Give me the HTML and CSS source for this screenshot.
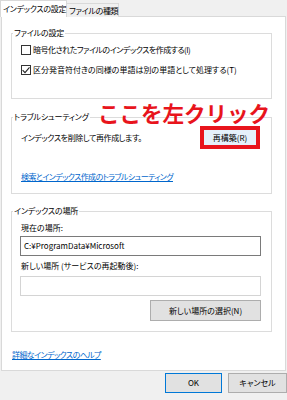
FILE: index.html
```html
<!DOCTYPE html>
<html lang="ja">
<head>
<meta charset="utf-8">
<link rel="stylesheet" href="styles.css">
</head>
<body>
<div class="dialog">
  <div class="tabs">
    <div class="tab active">インデックスの設定</div>
    <div class="tab">ファイルの種類</div>
  </div>
  <div class="panel">
    <section class="group g1">
      <div class="legend">ファイルの設定</div>
      <div class="check-row first">
        <span class="checkbox"></span>
        <span class="t-encrypt">暗号化されたファイルのインデックスを作成する(I)</span>
      </div>
      <div class="check-row">
        <span class="checkbox"><svg viewBox="0 0 10 10" width="10" height="10"><path d="M1.6 5.1 L4 7.6 L8.5 2.3" fill="none" stroke="#222" stroke-width="1.1"/></svg></span>
        <span>区分発音符付きの同様の単語は別の単語として処理する(T)</span>
      </div>
    </section>

    <section class="group g2">
      <div class="legend">トラブルシューティング</div>
      <div class="rebuild-row">
        <span class="t-rebuild">インデックスを削除して再作成します。</span>
        <span class="highlight"><span class="btn rebuild">再構築(R)</span></span>
      </div>
      <a class="link trouble">検索とインデックス作成のトラブルシューティング</a>
      <div class="annotation">ここを左クリック</div>
    </section>

    <section class="group g3">
      <div class="legend">インデックスの場所</div>
      <div class="label l1">現在の場所:</div>
      <div class="textbox">C:¥ProgramData¥Microsoft</div>
      <div class="label l2">新しい場所 (サービスの再起動後):</div>
      <div class="textbox disabled"></div>
      <div class="btn-row"><span class="btn select">新しい場所の選択(N)</span></div>
    </section>

    <a class="link help">詳細なインデックスのヘルプ</a>
  </div>
  <div class="footer">
    <span class="btn ok">OK</span>
    <span class="btn cancel">キャンセル</span>
  </div>
</div>
</body>
</html>
```

FILE: styles.css
```css
* { box-sizing: border-box; }
html, body {
  margin: 0;
  padding: 0;
  background: #f0f0f0;
  width: 287px;
  height: 400px;
  overflow: hidden;
}
body {
  font-family: "Noto Sans CJK JP", "Noto Sans", sans-serif;
  font-size: 8px;
  line-height: 12px;
  color: #000;
  font-feature-settings: "palt";
}
.dialog { width: 287px; }
.tabs {
  display: flex;
  align-items: flex-end;
  height: 16px;
  position: relative;
  z-index: 1;
}
.tab {
  height: 14px;
  line-height: 13px;
  padding: 0 2px;
  border: 1px solid #d9d9d9;
  border-bottom: none;
  background: #f0f0f0;
  margin-bottom: -1px;
  white-space: nowrap;
  letter-spacing: -0.3px;
}
.tab.active {
  height: 17px;
  line-height: 15px;
  width: 67px;
  background: #fff;
  padding: 0 2px;
}
.tab + .tab { border-left: none; width: 52px; }
.panel {
  margin-left: 1px;
  width: 285px;
  height: 355px;
  background: #fff;
  border: 1px solid #d9d9d9;
  padding: 16px 0 0 9px;
}
.group {
  width: 261px;
  border: 1px solid #dcdcdc;
  padding: 0 10px 0 9px;
  position: relative;
}
.legend {
  width: fit-content;
  margin: -7px 0 0 -8px;
  padding: 0 1px;
  background: #fff;
  line-height: 12px;
  white-space: nowrap;
  letter-spacing: -0.2px;
}
.g1 { height: 66px; }
.g2 { height: 77px; margin-top: 18px; padding-right: 11px; }
.g3 { height: 121px; margin-top: 17px; }
.check-row {
  display: flex;
  align-items: center;
  gap: 2px;
  height: 12px;
  white-space: nowrap;
}
.check-row.first { margin-top: 5px; margin-bottom: 8px; }
.t-encrypt { letter-spacing: -0.5px; }
.checkbox {
  width: 10px;
  height: 10px;
  border: 1px solid #333;
  background: #fff;
  display: inline-flex;
  flex: none;
}
.checkbox svg { margin: -1px; }
.rebuild-row {
  display: flex;
  align-items: center;
  justify-content: space-between;
  height: 23px;
  margin-top: 3px;
}
.t-rebuild { letter-spacing: -0.4px; }
.highlight {
  border: 4px solid #e8141c;
  display: inline-flex;
}
.btn {
  display: inline-flex;
  align-items: center;
  justify-content: center;
  background: #e1e1e1;
  border: 1px solid #adadad;
  height: 21px;
  white-space: nowrap;
}
.btn.rebuild {
  width: 52px;
  height: 15px;
  background: #e5f1fb;
  border-color: #e5f1fb;
}
.link {
  display: block;
  width: fit-content;
  color: #0066cc;
  text-decoration: underline;
  text-underline-offset: 1px;
  white-space: nowrap;
  letter-spacing: -0.6px;
}
.trouble { margin-top: 22px; }
.annotation {
  position: absolute;
  left: 86px;
  top: -17px;
  font-size: 21.5px;
  line-height: 24px;
  font-weight: 700;
  color: #e8141c;
  font-feature-settings: normal;
  white-space: nowrap;
}
.label { height: 12px; white-space: nowrap; }
.l1 { margin-top: 5px; }
.l2 { margin-top: 4px; }
.textbox {
  height: 20px;
  margin: 2px 0 0 -1px;
  border: 1px solid #7a7a7a;
  background: #fff;
  padding: 0 3px;
  line-height: 18px;
  font-feature-settings: normal;
}
.textbox.disabled {
  border-color: #d4d4d4;
  margin-top: 4px;
}
.btn-row {
  display: flex;
  justify-content: flex-end;
  margin-top: 4px;
}
.btn.select { width: 111px; }
.help { margin-top: 17px; margin-left: 1px; }
.footer {
  display: flex;
  justify-content: flex-end;
  gap: 6px;
  padding-top: 2px;
}
.btn.ok {
  width: 57px;
  height: 20px;
  border-color: #0078d7;
}
.btn.cancel {
  width: 59px;
  height: 20px;
}
```
